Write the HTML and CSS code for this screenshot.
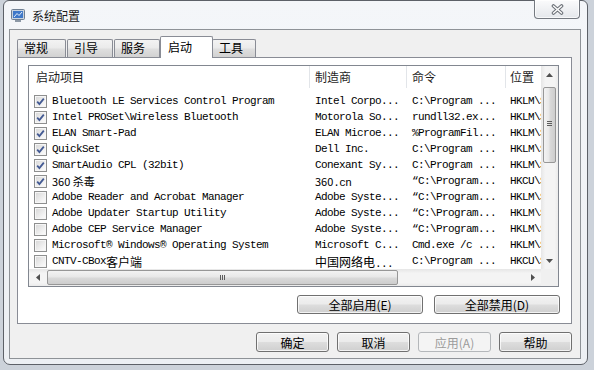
FILE: index.html
```html
<!DOCTYPE html>
<html lang="zh-CN">
<head>
  <meta charset="UTF-8">
  <meta name="viewport" content="width=device-width,initial-scale=1.0">
  <title>系统配置</title>
  <link rel="stylesheet" href="styles.css">
</head>
<body>
  <div class="window">
    <!-- 1) Title bar -->
    <div class="titlebar">
      <svg class="app-icon" viewBox="0 0 14 13">
        <rect x="0.5" y="0.5" width="13" height="10" rx="1" fill="#c9d3de" stroke="#6f7f92"/>
        <rect x="2" y="2" width="10" height="7" fill="#3f78c8"/>
        <path d="M3 8L6 4.5L8 6.5L11 3" stroke="#e4eefa" fill="none"/>
        <rect x="4" y="11" width="6" height="2" fill="#8c98a6"/>
      </svg>
      <span class="title">系统配置</span>
      <div class="close-btn">
        <svg viewBox="0 0 13 11">
          <path d="M2.5 2L10.5 9M10.5 2L2.5 9" stroke="#6a6f76" stroke-width="3.6" stroke-linecap="round"/>
          <path d="M2.5 2L10.5 9M10.5 2L2.5 9" stroke="#fbfbfb" stroke-width="1.6" stroke-linecap="round"/>
        </svg>
      </div>
    </div>

    <!-- 2) Client area -->
    <div class="client">
      <div class="tabs">
        <div class="tab">常规</div>
        <div class="tab">引导</div>
        <div class="tab">服务</div>
        <div class="tab active">启动</div>
        <div class="tab">工具</div>
      </div>

      <div class="panel">
        <div class="listview">
          <div class="lv-top">
            <div class="lv-main">
              <div class="lv-header">
                <div class="c1">启动项目</div>
                <div class="c2">制造商</div>
                <div class="c3">命令</div>
                <div class="c4">位置</div>
              </div>
              <div class="lv-rows">
                <div class="row"><div class="c1"><span class="cb on"></span>Bluetooth LE Services Control Program</div><div class="c2">Intel Corpo...</div><div class="c3">C:\Program ...</div><div class="c4">HKLM\SOFTWARE</div></div>
                <div class="row"><div class="c1"><span class="cb on"></span>Intel PROSet\Wireless Bluetooth</div><div class="c2">Motorola So...</div><div class="c3">rundll32.ex...</div><div class="c4">HKLM\SOFTWARE</div></div>
                <div class="row"><div class="c1"><span class="cb on"></span>ELAN Smart-Pad</div><div class="c2">ELAN Microe...</div><div class="c3">%ProgramFil...</div><div class="c4">HKLM\SOFTWARE</div></div>
                <div class="row"><div class="c1"><span class="cb on"></span>QuickSet</div><div class="c2">Dell Inc.</div><div class="c3">C:\Program ...</div><div class="c4">HKLM\SOFTWARE</div></div>
                <div class="row"><div class="c1"><span class="cb on"></span>SmartAudio CPL (32bit)</div><div class="c2">Conexant Sy...</div><div class="c3">C:\Program ...</div><div class="c4">HKLM\SOFTWARE</div></div>
                <div class="row"><div class="c1"><span class="cb on"></span><span class="sans">360 杀毒</span></div><div class="c2"><span class="sans">360</span>.cn</div><div class="c3">“C:\Program...</div><div class="c4">HKCU\SOFTWARE</div></div>
                <div class="row"><div class="c1"><span class="cb"></span>Adobe Reader and Acrobat Manager</div><div class="c2">Adobe Syste...</div><div class="c3">“C:\Program...</div><div class="c4">HKLM\SOFTWARE</div></div>
                <div class="row"><div class="c1"><span class="cb"></span>Adobe Updater Startup Utility</div><div class="c2">Adobe Syste...</div><div class="c3">“C:\Program...</div><div class="c4">HKLM\SOFTWARE</div></div>
                <div class="row"><div class="c1"><span class="cb"></span>Adobe CEP Service Manager</div><div class="c2">Adobe Syste...</div><div class="c3">“C:\Program...</div><div class="c4">HKLM\SOFTWARE</div></div>
                <div class="row"><div class="c1"><span class="cb"></span>Microsoft® Windows® Operating System</div><div class="c2">Microsoft C...</div><div class="c3">Cmd.exe /c ...</div><div class="c4">HKLM\SOFTWARE</div></div>
                <div class="row"><div class="c1"><span class="cb"></span>CNTV-CBox<span class="cjk">客户端</span></div><div class="c2"><span class="cjk">中国网络电</span>...</div><div class="c3">C:\Program ...</div><div class="c4">HKCU\SOFTWARE</div></div>
              </div>
            </div>
            <!-- vertical scrollbar -->
            <div class="vscroll">
              <div class="sb-btn"><svg viewBox="0 0 7 4"><polygon points="0,4 3.5,0 7,4" fill="#505050"/></svg></div>
              <div class="sb-track"><div class="v-thumb"></div></div>
              <div class="sb-btn"><svg viewBox="0 0 7 4"><polygon points="0,0 3.5,4 7,0" fill="#505050"/></svg></div>
            </div>
          </div>
          <div class="lv-bottom">
            <div class="hscroll">
              <div class="sb-btn h"><svg class="hv" viewBox="0 0 4 7"><polygon points="4,0 0,3.5 4,7" fill="#505050"/></svg></div>
              <div class="sb-track h"><div class="h-thumb"></div></div>
              <div class="sb-btn h"><svg class="hv" viewBox="0 0 4 7"><polygon points="0,0 4,3.5 0,7" fill="#505050"/></svg></div>
            </div>
            <div class="corner"></div>
          </div>
        </div>

        <div class="panel-actions">
          <button class="btn wide">全部启用(E)</button>
          <button class="btn wide">全部禁用(D)</button>
        </div>
      </div>

      <!-- 3) Dialog buttons -->
      <div class="dialog-actions">
        <button class="btn">确定</button>
        <button class="btn">取消</button>
        <button class="btn" disabled>应用(A)</button>
        <button class="btn">帮助</button>
      </div>
    </div>
  </div>
</body>
</html>
```

FILE: styles.css
```css
* { margin:0; padding:0; box-sizing:border-box; }
body {
  width:594px; height:370px; overflow:hidden;
  background:#ccd2da;
  font-family:"Noto Sans CJK SC", "Liberation Sans", sans-serif;
  font-size:12px; color:#000;
}

/* 1) Aero frame */
.window {
  position:relative;
  margin-left:3px;
  width:585px; height:365px;
  border:1px solid #5d6168; border-radius:6px 6px 7px 7px;
  background:linear-gradient(#f4f6f9, #eceff3);
  padding-left:5px;
}
.titlebar {
  height:28px;
  display:flex; align-items:center; gap:7px;
  padding-left:2px;
}
.app-icon { width:14px; height:13px; }
.title { font-size:12px; color:#1a1a1a; }
.close-btn {
  position:absolute; top:-1px; right:7px;
  width:46px; height:19px;
  border:1px solid #747980; border-top:none; border-radius:0 0 4px 4px;
  background:linear-gradient(#fbfbfc, #e4e7eb);
  box-shadow:inset 0 0 0 1px rgba(255,255,255,0.7);
  display:flex; align-items:center; justify-content:center;
}
.close-btn svg { width:13px; height:11px; }

/* 2) Client area + tabs */
.client {
  width:572px; height:330px;
  border:1px solid #8e9297;
  background:#f0f0f0;
  padding:6px 8px 6px 7px;
  display:flex; flex-direction:column;
}
.tabs { display:flex; align-items:flex-end; height:22px; }
.tab {
  height:18px; margin-bottom:1px;
  border:1px solid #898c95; border-bottom:none; border-radius:2px 2px 0 0;
  background:linear-gradient(#f3f3f3, #ebebeb 45%, #dedede 55%, #d2d2d2);
  padding-left:6px; line-height:16px;
  white-space:nowrap;
}
.tab:nth-child(1) { width:49px; margin-right:1px; }
.tab:nth-child(2) { width:46px; margin-right:1px; }
.tab:nth-child(3) { width:46px; }
.tab:nth-child(5) { width:44px; }
.tab.active {
  position:relative; z-index:1;
  width:53px; height:22px; margin-bottom:0; margin-right:-1px;
  background:#fff;
  padding-left:7px; padding-top:1px; line-height:18px;
}

.panel {
  margin-top:-1px;
  height:267px;
  border:1px solid #898c95;
  background:#fff;
  padding:7px 11px 0 10px;
}

/* 3) List view */
.listview {
  width:531px; height:222px;
  border:1px solid #828790;
  display:flex; flex-direction:column;
  font-family:"Liberation Mono", "Noto Sans CJK SC", monospace;
  font-size:11px; letter-spacing:-0.6px;
}
.lv-top { display:flex; height:203px; }
.lv-main { flex:1; overflow:hidden; }
.c1 { width:281px; }
.c2 { width:97px; }
.c3 { width:99px; }
.c4 { flex:1; }
.lv-header {
  display:flex; height:22px;
  font-family:"Noto Sans CJK SC", sans-serif; font-size:12px; letter-spacing:0;
  color:#1e1e1e;
}
.lv-header > div { line-height:22px; border-right:1px solid #e2e5e9; padding-left:5px; }
.lv-header .c1 { padding-left:7px; }
.lv-header .c4 { border-right:none; padding-left:4px; }
.lv-rows { padding-top:5px; }
.row { display:flex; height:16px; align-items:center; }
.row > div { white-space:nowrap; overflow:hidden; padding-left:5px; }
.row .c1 { display:flex; align-items:center; }
.row .c4 { padding-left:4px; }
.sans { font-family:"Noto Sans CJK SC", sans-serif; font-size:11px; letter-spacing:0; }
.cjk { font-family:"Noto Sans CJK SC", sans-serif; font-size:12px; letter-spacing:0; }

.cb {
  width:13px; height:13px; flex-shrink:0; margin-right:5px;
  border:1px solid #8e8f8f;
  background:linear-gradient(135deg, #d6d6d6, #f3f3f3 70%, #fdfdfd);
  box-shadow:inset 0 0 0 1px #f6f6f6;
}
.cb.on {
  background:
    url("data:image/svg+xml,%3Csvg xmlns='http://www.w3.org/2000/svg' viewBox='0 0 11 11'%3E%3Cpath d='M2.2 5.6L4.4 8L8.8 2.6' stroke='%23435a93' stroke-width='1.8' fill='none'/%3E%3C/svg%3E") center/11px 11px no-repeat,
    linear-gradient(135deg, #d6d6d6, #f3f3f3 70%, #fdfdfd);
}

/* scrollbars */
.vscroll {
  width:17px;
  display:flex; flex-direction:column;
  background:linear-gradient(to right, #e6e6e6, #f4f4f4 25%, #f4f4f4 80%, #ebebeb);
}
.sb-btn { height:17px; display:flex; align-items:center; justify-content:center; }
.sb-btn svg { width:7px; height:4px; }
.sb-btn.h { width:17px; height:auto; }
.sb-btn .hv { width:4px; height:7px; }
.sb-track { flex:1; padding-top:4px; }
.v-thumb {
  position:relative;
  width:13px; height:76px; margin-left:2px;
  border:1px solid #979797; border-radius:2px;
  background:linear-gradient(to right, #f3f3f3, #e8e8e8 45%, #d9d9d9 55%, #cdcdcd);
}
.v-thumb::before {
  content:''; position:absolute; left:3px; top:33px;
  width:5px; height:5px;
  background:repeating-linear-gradient(#5c5c5c 0 1px, transparent 1px 2px);
}
.lv-bottom { display:flex; height:17px; }
.hscroll {
  flex:1; display:flex;
  background:linear-gradient(#e6e6e6, #f4f4f4 25%, #f4f4f4 80%, #ebebeb);
}
.sb-track.h { padding-top:1px; }
.h-thumb {
  position:relative;
  width:351px; height:15px; margin-left:1px;
  border:1px solid #979797; border-radius:2px;
  background:linear-gradient(#f3f3f3, #e8e8e8 45%, #d9d9d9 55%, #cdcdcd);
}
.h-thumb::before {
  content:''; position:absolute; left:172px; top:4px;
  width:5px; height:5px;
  background:repeating-linear-gradient(to right, #5c5c5c 0 1px, transparent 1px 2px);
}
.corner { width:17px; background:#f0f0f0; }

/* 4) Buttons */
.btn {
  height:20px;
  border:1px solid #707070; border-radius:3px;
  background:linear-gradient(#f2f2f2, #ebebeb 48%, #dddddd 52%, #cfcfcf);
  box-shadow:inset 0 0 0 1px rgba(255,255,255,0.75);
  font-family:"Noto Sans CJK SC", sans-serif; font-size:12px; color:#000;
  width:73px;
}
.btn:disabled {
  color:#9b9b9b; border-color:#b4b7ba;
  background:#f4f4f4; box-shadow:none;
}
.btn.wide { width:126px; height:19px; }
.panel-actions { display:flex; justify-content:flex-end; gap:11px; margin-top:8px; }
.dialog-actions { display:flex; justify-content:flex-end; gap:8px; margin-top:8px; }
```
